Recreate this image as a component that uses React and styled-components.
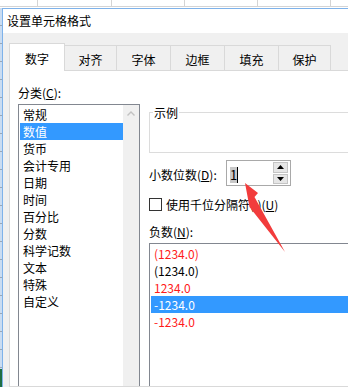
import React from "react";
import styled, { createGlobalStyle } from "styled-components";

const GlobalStyle = createGlobalStyle`
  html, body {
    margin: 0;
    padding: 0;
    width: 348px;
    height: 387px;
    overflow: hidden;
    background: #ffffff;
  }
  body {
    font-family: "Noto Sans CJK SC", "Noto Sans", sans-serif;
    font-size: 12px;
    color: #000;
  }
  u { text-decoration: underline; text-underline-offset: 1px; }
`;

const Page = styled.div`
  position: relative;
  width: 348px;
  height: 387px;
  overflow: hidden;
  display: flex;
  flex-direction: column;
`;

const SheetTop = styled.div`
  height: 8px;
  display: flex;
  flex: none;
  background: #ffffff;
`;

const SheetCell = styled.div`
  flex: none;
  width: ${(p) => p.$w}px;
  height: 6px;
  border-right: 1px solid #d4d4d4;
  border-bottom: 1px solid #d4d4d4;
`;

const Main = styled.div`
  flex: 1;
  display: flex;
  min-height: 0;
`;

const SheetLeft = styled.div`
  width: 2px;
  flex: none;
  background:
    linear-gradient(to bottom, transparent 0, transparent 361px, #1f6e43 361px),
    repeating-linear-gradient(to bottom, #c9dcf2 0, #c9dcf2 17px, #9aa7b6 17px, #9aa7b6 18px);
`;

const Dialog = styled.div`
  flex: none;
  width: 460px;
  display: flex;
  flex-direction: column;
  border-top: 1px solid #7eb2ea;
  border-left: 1px solid #7eb2ea;
  background: #f0f0f0;
`;

const TitleBar = styled.div`
  height: 24px;
  flex: none;
  background: #ffffff;
  padding-left: 4px;
  line-height: 24px;
  font-size: 12px;
`;

const Body = styled.div`
  flex: 1;
  display: flex;
  flex-direction: column;
  padding: 10px 0 0 6px;
  min-height: 0;
`;

const TabRow = styled.div`
  display: flex;
  align-items: flex-end;
  height: 27px;
  flex: none;
  position: relative;
  z-index: 1;
`;

const Tab = styled.div`
  flex: none;
  box-sizing: border-box;
  width: ${(p) => p.$w}px;
  height: ${(p) => (p.$active ? 28 : 25)}px;
  margin-left: ${(p) => (p.$first ? 0 : -1)}px;
  margin-bottom: ${(p) => (p.$active ? -1 : 0)}px;
  border: 1px solid #d9d9d9;
  border-bottom: none;
  background: ${(p) => (p.$active ? "#ffffff" : "#f0f0f0")};
  position: relative;
  z-index: ${(p) => (p.$active ? 2 : 1)};
  display: flex;
  align-items: center;
  justify-content: center;
  padding-top: 2px;
  font-size: 12px;
`;

const Panel = styled.div`
  flex: 1;
  display: flex;
  gap: 9px;
  background: #ffffff;
  border: 1px solid #d9d9d9;
  padding: 13px 0 0 8px;
  min-height: 0;
`;

const Column = styled.div`
  flex: none;
  width: ${(p) => p.$w}px;
  display: flex;
  flex-direction: column;
`;

const Label = styled.div`
  height: 17px;
  line-height: 17px;
  margin-top: ${(p) => p.$mt || 0}px;
  white-space: nowrap;
`;

const ListBox = styled.div`
  flex: 1;
  margin-top: 3px;
  border: 1px solid #828790;
  border-bottom: none;
  display: flex;
  background: #ffffff;
`;

const ListItems = styled.div`
  flex: 1;
  padding: 1px 0 0 1px;
  display: flex;
  flex-direction: column;
`;

const Item = styled.div`
  height: 17px;
  line-height: 17px;
  padding-left: 3px;
  white-space: nowrap;
  background: ${(p) => (p.$selected ? "#3399ff" : "transparent")};
  color: ${(p) => (p.$selected ? "#ffffff" : p.$red ? "#ff1a1a" : "#000000")};
`;

const ScrollBar = styled.div`
  width: 16px;
  flex: none;
  background: #f0f0f0;
  display: flex;
  justify-content: center;
  padding-top: 6px;
  box-sizing: border-box;
`;

const GroupBox = styled.div`
  position: relative;
  margin-top: 28px;
  height: 41px;
  box-sizing: border-box;
  border: 1px solid #dcdcdc;
`;

const Legend = styled.span`
  position: absolute;
  top: -9px;
  left: 3px;
  padding: 0 1px;
  line-height: 17px;
  background: #ffffff;
`;

const SpinRow = styled.div`
  margin-top: 7px;
  height: 26px;
  display: flex;
  align-items: center;
`;

const SpinLabel = styled.div`
  width: 77px;
  flex: none;
  line-height: 17px;
  padding-top: 2px;
  white-space: nowrap;
`;

const SpinBox = styled.div`
  width: 65px;
  height: 26px;
  box-sizing: border-box;
  border: 1px solid #a9a9a9;
  display: flex;
  justify-content: space-between;
  padding: 1px 2px 1px 3px;
  background: #ffffff;
`;

const SpinValue = styled.div`
  display: flex;
  align-items: center;
  padding-top: 2px;
  height: 22px;
`;

const Selected = styled.span`
  display: inline-block;
  width: 7px;
  height: 16px;
  line-height: 16px;
  text-align: center;
  background: #c8c8c8;
  font-size: 13px;
`;

const Caret = styled.span`
  display: inline-block;
  width: 1px;
  height: 16px;
  background: #000;
`;

const SpinButtons = styled.div`
  width: 15px;
  display: flex;
  flex-direction: column;
  gap: 1px;
`;

const SpinButton = styled.div`
  flex: 1;
  background: #e6e6e6;
  border: 1px solid #c4c4c4;
  display: flex;
  align-items: center;
  justify-content: center;
`;

const CheckRow = styled.div`
  margin-top: 10px;
  height: 17px;
  display: flex;
  align-items: center;
  gap: 4px;
  white-space: nowrap;
`;

const CheckBox = styled.span`
  width: 13px;
  height: 13px;
  box-sizing: border-box;
  border: 1px solid #333333;
  background: #fff;
  flex: none;
`;

const ArrowLayer = styled.svg`
  position: absolute;
  left: 0;
  top: 0;
  width: 348px;
  height: 387px;
  pointer-events: none;
`;

const Triangle = ({ up }) => (
  <svg width="7" height="4" viewBox="0 0 7 4">
    <path d={up ? "M0 4 L3.5 0 L7 4 Z" : "M0 0 L3.5 4 L7 0 Z"} fill="#000" />
  </svg>
);

const categories = ["常规", "数值", "货币", "会计专用", "日期", "时间", "百分比", "分数", "科学记数", "文本", "特殊", "自定义"];
const negatives = [
  { t: "(1234.0)", red: true },
  { t: "(1234.0)", red: false },
  { t: "1234.0", red: true },
  { t: "-1234.0", red: false, sel: true },
  { t: "-1234.0", red: true },
];
const tabs = [
  { t: "数字", w: 56, active: true },
  { t: "对齐", w: 53 },
  { t: "字体", w: 55 },
  { t: "边框", w: 55 },
  { t: "填充", w: 55 },
  { t: "保护", w: 53 },
];

export default function App() {
  return (
    <Page>
      <GlobalStyle />
      <SheetTop>
        {[37, 73, 72, 72, 72, 60].map((w, i) => (
          <SheetCell key={i} $w={w} />
        ))}
      </SheetTop>
      <Main>
        <SheetLeft />
        <Dialog>
          <TitleBar>设置单元格格式</TitleBar>
          <Body>
            <TabRow>
              {tabs.map((tab, i) => (
                <Tab key={tab.t} $w={tab.w} $active={tab.active} $first={i === 0}>
                  {tab.t}
                </Tab>
              ))}
            </TabRow>
            <Panel>
              <Column $w={122}>
                <Label>
                  分类(<u>C</u>):
                </Label>
                <ListBox>
                  <ListItems>
                    {categories.map((c) => (
                      <Item key={c} $selected={c === "数值"}>
                        {c}
                      </Item>
                    ))}
                  </ListItems>
                  <ScrollBar>
                    <svg width="8" height="5" viewBox="0 0 8 5">
                      <path d="M0.5 4.5 L4 1 L7.5 4.5" fill="none" stroke="#c2c2c2" strokeWidth="1.4" />
                    </svg>
                  </ScrollBar>
                </ListBox>
              </Column>
              <Column $w={300}>
                <GroupBox>
                  <Legend>示例</Legend>
                </GroupBox>
                <SpinRow>
                  <SpinLabel>
                    小数位数(<u>D</u>):
                  </SpinLabel>
                  <SpinBox>
                    <SpinValue>
                      <Selected>1</Selected>
                      <Caret />
                    </SpinValue>
                    <SpinButtons>
                      <SpinButton>
                        <Triangle up />
                      </SpinButton>
                      <SpinButton>
                        <Triangle />
                      </SpinButton>
                    </SpinButtons>
                  </SpinBox>
                </SpinRow>
                <CheckRow>
                  <CheckBox />
                  <span>
                    使用千位分隔符(,)(<u>U</u>)
                  </span>
                </CheckRow>
                <Label $mt={10}>
                  负数(<u>N</u>):
                </Label>
                <ListBox>
                  <ListItems>
                    {negatives.map((n, i) => (
                      <Item key={i} $red={n.red} $selected={n.sel}>
                        {n.t}
                      </Item>
                    ))}
                  </ListItems>
                </ListBox>
              </Column>
            </Panel>
          </Body>
        </Dialog>
      </Main>
      <ArrowLayer viewBox="0 0 348 387">
        <path d="M245 183 L258 193 L254.5 197 L285 252 L249.5 207 Z" fill="#f23c3c" />
      </ArrowLayer>
    </Page>
  );
}
